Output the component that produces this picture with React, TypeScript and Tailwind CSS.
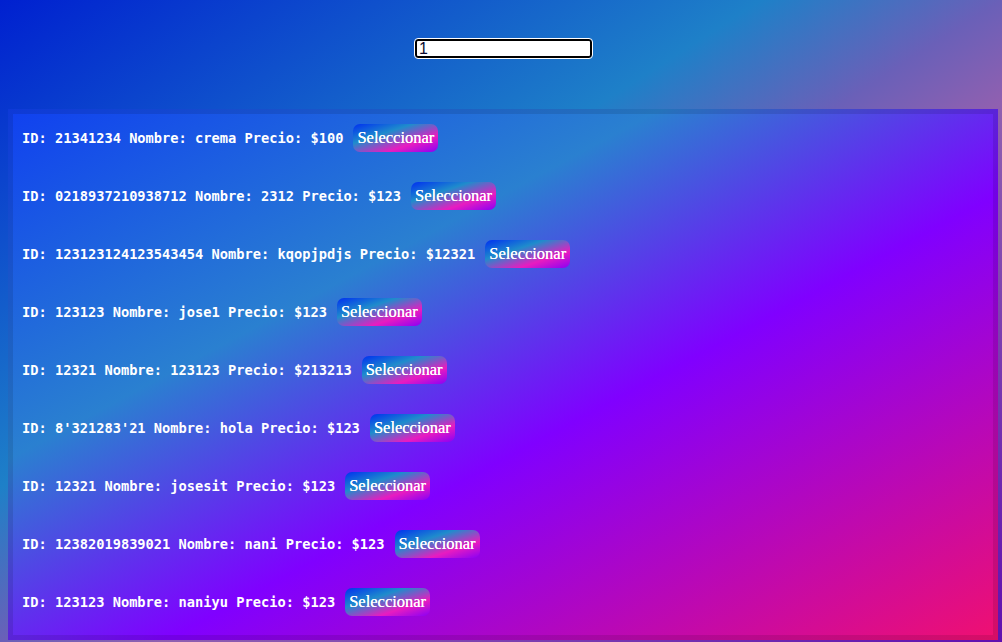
import { useState } from 'react';

interface Producto {
  id: string;
  nombre: string;
  precio: string;
}

const productos: Producto[] = [
  { id: '21341234', nombre: 'crema', precio: '100' },
  { id: '0218937210938712', nombre: '2312', precio: '123' },
  { id: '123123124123543454', nombre: 'kqopjpdjs', precio: '12321' },
  { id: '123123', nombre: 'jose1', precio: '123' },
  { id: '12321', nombre: '123123', precio: '213213' },
  { id: "8'321283'21", nombre: 'hola', precio: '123' },
  { id: '12321', nombre: 'josesit', precio: '123' },
  { id: '12382019839021', nombre: 'nani', precio: '123' },
  { id: '123123', nombre: 'naniyu', precio: '123' },
];

export default function App() {
  const [busqueda, setBusqueda] = useState('1');

  return (
    <div className="min-h-[642px] w-full overflow-hidden pt-[38px] bg-[linear-gradient(to_bottom_right,#0020d0_0%,#1e80c8_38%,#6a60b8_50%,#9060b0_58%,#6010b0_100%)]">
      {/* buscador */}
      <div className="flex justify-center pl-[5px]">
        <input
          value={busqueda}
          onChange={(e) => setBusqueda(e.target.value)}
          className="w-[177px] h-[19px] mt-[1px] border-2 border-black rounded-[3px] bg-white pl-[2px] pt-[1px] pb-0 text-[16px] leading-[15px] text-[#0a0a30] font-['Liberation_Sans',sans-serif] outline outline-1 outline-white"
        />
      </div>

      {/* lista de productos */}
      <div className="mt-[51px] ml-[8px] w-[990px] border-[5px] border-black/10 bg-origin-border pt-[10px] pb-[19px] pl-[9px] flex flex-col gap-[30px] bg-[linear-gradient(to_bottom_right,#1040f0_0%,#2a80d0_33%,#8000ff_58%,#f01070_100%)]">
        {productos.map((p, idx) => (
          <div key={idx} className="flex items-center h-[28px]">
            <span className="text-white font-bold text-[13.7px] font-['DejaVu_Sans_Mono',monospace] whitespace-pre">
              {`ID: ${p.id} Nombre: ${p.nombre} Precio: $${p.precio}`}
            </span>
            <button className="ml-[10px] h-[28px] px-[4px] rounded-[7px] text-white text-[16.5px] leading-none font-['Liberation_Serif',serif] [text-shadow:0_0_0.4px_#fff] bg-[linear-gradient(to_bottom_right,#0030f0_0%,#1f8ccc_35%,#e81cc0_70%,#8a00f5_100%)]">
              Seleccionar
            </button>
          </div>
        ))}
      </div>
    </div>
  );
}
